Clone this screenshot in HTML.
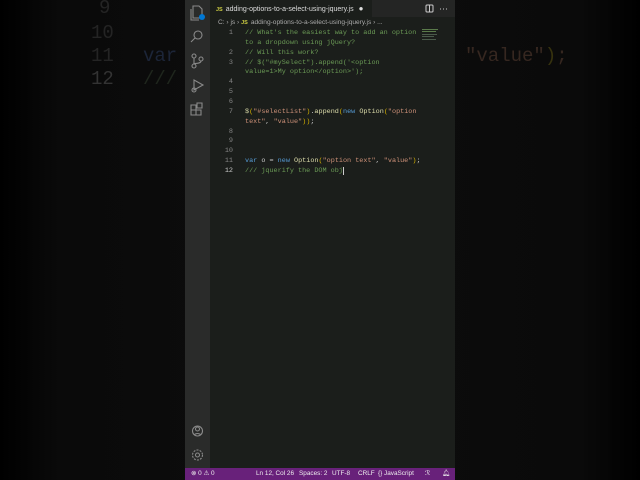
<!DOCTYPE html>
<html><head><meta charset="utf-8"><style>
*{margin:0;padding:0;box-sizing:border-box}
body{width:640px;height:480px;overflow:hidden;background:linear-gradient(90deg,#000 0,#0a0a0a 60px,#0d0d0d 320px,#0a0a0a 580px,#000 640px);position:relative;font-family:"Liberation Sans",sans-serif}
.bg{position:absolute;font-family:"Liberation Mono",monospace;font-size:19px;color:#242424;white-space:pre}
.win{position:absolute;left:185px;top:0;width:270px;height:480px;background:#1b1e1b}
.act{position:absolute;left:0;top:0;width:25px;height:468px;background:#2a2b2a}
.tabs{position:absolute;left:25px;top:0;width:245px;height:17px;background:#242524}
.tab{position:absolute;left:0;top:0;width:162px;height:17px;background:#1b1e1b;font-size:7px;color:#ddd;line-height:17px;padding-left:6px;white-space:nowrap}
.js{color:#cbcb41;font-weight:bold;font-size:5.5px;margin-right:3px}
.bc{position:absolute;left:33px;top:19px;font-size:6.6px;color:#aaa;white-space:nowrap}
.code{position:absolute;left:25px;top:29px;font-family:"Liberation Mono",monospace;font-size:6.8px;line-height:9.85px;white-space:pre}
.ln{position:absolute;left:0;width:23px;text-align:right;color:#858585}
.ln.cur{color:#ccc}
.t{position:absolute;left:35px;color:#ccc}
.c{color:#6a9955}.s{color:#ce9178}.k{color:#569cd6}.f{color:#dcdcaa}.p{color:#d4b000}
.sb{position:absolute;left:0;top:468px;width:270px;height:12px;background:#68217a;color:#eee;font-size:6.4px;line-height:12px;white-space:nowrap}
.sb span{position:absolute}
svg{position:absolute}
</style></head><body>
<div class="bg" style="left:99px;top:-3px">9</div>
<div class="bg" style="left:91px;top:22px">10</div>
<div class="bg" style="left:91px;top:45px">11</div>
<div class="bg" style="left:91px;top:68px;color:#333">12</div>
<div class="bg" style="left:143px;top:45px;color:#1c2538">var o</div>
<div class="bg" style="left:143px;top:68px;color:#1f261d">/// j</div>
<div class="bg" style="left:465px;top:45px;color:#362720">"value"<span style="color:#36320e">)</span>;</div>
<div class="win">
 <div class="act">
  <svg width="25" height="468" viewBox="0 0 25 468" fill="none" stroke="#8a8a8a" stroke-width="1.1">
   <path d="M8 6h6l3 3v9H8z M6 9v11h8"/><circle cx="17" cy="17" r="3" fill="#0078d4" stroke="none"/>
   <circle cx="13" cy="35" r="4"/><path d="M10 38l-4 4"/>
   <circle cx="9" cy="56" r="2"/><circle cx="9" cy="66" r="2"/><circle cx="16" cy="59" r="2"/><path d="M9 58v6 M16 61c0 3-7 2-7 3"/>
   <path d="M9 80l9 5-9 5z"/><circle cx="9" cy="90" r="2"/>
   <path d="M6 105h5v5H6z M11 110h5v5h-5z M6 110h5v5H6z M12 103h5v5h-5z"/>
   <circle cx="12.5" cy="431" r="5"/><circle cx="12.5" cy="429" r="2"/><path d="M9 435c2-2 5-2 7 0"/>
   <circle cx="12.5" cy="455" r="5" stroke-dasharray="2 1.2"/><circle cx="12.5" cy="455" r="2"/>
  </svg>
 </div>
 <div class="tabs"><div class="tab"><span class="js">JS</span>adding-options-to-a-select-using-jquery.js <span style="font-size:8px;margin-left:3px">●</span></div>
  <svg width="245" height="17" style="left:0;top:0" fill="none" stroke="#ccc" stroke-width="1"><rect x="216" y="5" width="7" height="7" rx="1"/><path d="M219.5 5v7"/><path d="M230 9h1M233 9h1M236 9h1"/></svg>
 </div>
 <div class="bc">C: › js › <span class="js">JS</span>adding-options-to-a-select-using-jquery.js › ...</div>
 <svg width="30" height="30" style="left:235px;top:26px" fill="#4a5a4a"><rect x="2" y="3" width="16" height="1" fill="#5a7a4a"/><rect x="2" y="5" width="14" height="1" fill="#5a7a4a"/><rect x="2" y="8" width="15" height="1"/><rect x="2" y="10" width="12" height="1"/><rect x="2" y="13" width="14" height="1"/></svg>
 <div class="code">
  <div class="ln" style="top:0">1</div><div class="t" style="top:0"><span class="c">// What's the easiest way to add an option</span></div>
  <div class="t" style="top:9.85px"><span class="c">to a dropdown using jQuery?</span></div>
  <div class="ln" style="top:19.7px">2</div><div class="t" style="top:19.7px"><span class="c">// Will this work?</span></div>
  <div class="ln" style="top:29.55px">3</div><div class="t" style="top:29.55px"><span class="c">// $("#mySelect").append('&lt;option</span></div>
  <div class="t" style="top:39.4px"><span class="c">value=1&gt;My option&lt;/option&gt;');</span></div>
  <div class="ln" style="top:49.25px">4</div>
  <div class="ln" style="top:59.1px">5</div>
  <div class="ln" style="top:68.95px">6</div>
  <div class="ln" style="top:78.8px">7</div><div class="t" style="top:78.8px"><span class="f">$</span><span class="p">(</span><span class="s">"#selectList"</span><span class="p">)</span>.<span class="f">append</span><span class="p">(</span><span class="k">new</span> <span class="f">Option</span><span class="p">(</span><span class="s">"option</span></div>
  <div class="t" style="top:88.65px"><span class="s">text"</span>, <span class="s">"value"</span><span class="p">))</span>;</div>
  <div class="ln" style="top:98.5px">8</div>
  <div class="ln" style="top:108.35px">9</div>
  <div class="ln" style="top:118.2px">10</div>
  <div class="ln" style="top:128.05px">11</div><div class="t" style="top:128.05px"><span class="k">var</span> o = <span class="k">new</span> <span class="f">Option</span><span class="p">(</span><span class="s">"option text"</span>, <span class="s">"value"</span><span class="p">)</span>;</div>
  <div class="ln cur" style="top:137.9px">12</div><div class="t" style="top:137.9px"><span class="c">/// jquerify the DOM obj</span><span style="border-left:1px solid #ccc"></span></div>
 </div>
 <div class="sb">
  <span style="left:6px">⊗ 0 ⚠ 0</span>
  <span style="left:71px">Ln 12, Col 26</span>
  <span style="left:114px">Spaces: 2</span>
  <span style="left:147px">UTF-8</span>
  <span style="left:173px">CRLF</span>
  <span style="left:193px">{} JavaScript</span>
  <span style="left:240px">ℛ</span>
  <span style="left:257px">🔔︎</span>
 </div>
</div>
</body></html>
